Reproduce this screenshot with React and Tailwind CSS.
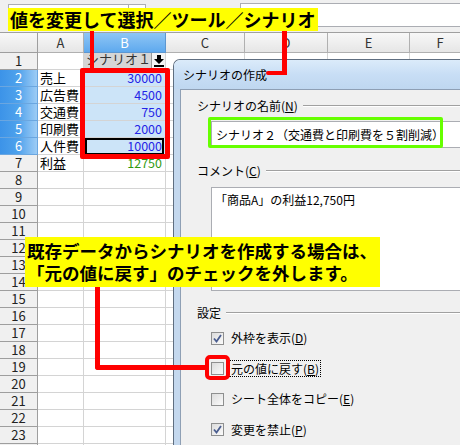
import React from 'react';

const font = { fontFamily: '"Noto Sans CJK JP", "Liberation Sans", sans-serif' };

const rows = [
  { n: 1, a: '', b: '', combo: true },
  { n: 2, a: '売上', b: '30000', sel: true },
  { n: 3, a: '広告費', b: '4500', sel: true },
  { n: 4, a: '交通費', b: '750', sel: true },
  { n: 5, a: '印刷費', b: '2000', sel: true },
  { n: 6, a: '人件費', b: '10000', sel: true, active: true },
  { n: 7, a: '利益', b: '12750', green: true },
];
for (let i = 8; i <= 24; i++) rows.push({ n: i, a: '', b: '' });

const GroupLabel = ({ children }) => (
  <div className="flex h-[16px] items-center gap-[5px]">
    <span className="text-[12px] leading-[16px] whitespace-nowrap">{children}</span>
    <div className="h-[2px] flex-1 border-t border-b border-t-[#a0a0a0] border-b-white" />
  </div>
);

const Checkbox = ({ checked }) => (
  <div className="flex h-[13px] w-[13px] shrink-0 items-center justify-center border border-[#8e8f8f] bg-linear-to-br from-[#dcdcdc] to-[#fbfbfb]">
    {checked && (
      <svg width="9" height="9" viewBox="0 0 9 9">
        <path d="M1 4.5 L3.5 7.5 L8 1" fill="none" stroke="#4a5d8f" strokeWidth="1.8" />
      </svg>
    )}
  </div>
);

const CheckRow = ({ checked, focus, children }) => (
  <div className="flex h-[16px] items-center gap-[5px]">
    <Checkbox checked={checked} />
    <span
      className={
        focus
          ? 'border border-dotted border-black px-[1px] text-[12px] leading-[15px] whitespace-nowrap'
          : 'px-[2px] text-[12px] leading-[16px] whitespace-nowrap'
      }
    >
      {children}
    </span>
  </div>
);

export default function App() {
  return (
    <div className="relative h-[445px] w-[460px] overflow-hidden bg-[#f0f0f0] text-black" style={font}>
      {/* formula bar */}
      <div className="relative h-[32px]">
        <div className="absolute left-[8px] top-[4px] flex h-[26px] w-[138px] border border-[#abadb3] bg-white">
          <div className="flex-1" />
          <div className="w-[17px] border-l border-[#abadb3]" />
        </div>
        <div className="absolute left-[240px] top-[3px] h-[24px] w-[230px] border border-[#abadb3] bg-white" />
      </div>

      {/* column header */}
      <div className="flex h-[21px] border-t border-[#a0a0a0] text-[13px] leading-[20px]">
        <div className="w-[38px] shrink-0 border-r border-b border-[#9e9e9e] bg-linear-to-b from-[#f8f8f8] to-[#e6e6e6]" />
        <div className="w-[46px] shrink-0 border-r border-b border-[#b0b0b0] bg-linear-to-b from-[#f8f8f8] to-[#e6e6e6] text-center text-[#333]">A</div>
        <div className="w-[82px] shrink-0 border-r border-b border-[#5d97d0] bg-linear-to-b from-[#8ec6f5] to-[#5ea9ee] text-center text-white">B</div>
        <div className="w-[79px] shrink-0 border-r border-b border-[#b0b0b0] bg-linear-to-b from-[#f8f8f8] to-[#e6e6e6] text-center text-[#333]">C</div>
        <div className="w-[83px] shrink-0 border-r border-b border-[#b0b0b0] bg-linear-to-b from-[#f8f8f8] to-[#e6e6e6] text-center text-[#333]">D</div>
        <div className="w-[82px] shrink-0 border-r border-b border-[#b0b0b0] bg-linear-to-b from-[#f8f8f8] to-[#e6e6e6] text-center text-[#333]">E</div>
        <div className="w-[60px] shrink-0 border-b border-[#b0b0b0] bg-linear-to-b from-[#f8f8f8] to-[#e6e6e6] text-center text-[#333]">F</div>
      </div>

      {/* grid rows */}
      {rows.map((r) => (
        <div key={r.n} className="flex h-[17px] bg-white text-[13px] leading-[16px]">
          <div
            className={
              r.sel
                ? 'w-[38px] shrink-0 border-r border-b border-[#6aa6e0] bg-linear-to-r from-[#3c93e8] via-[#4ea2ec] to-[#9dccf5] text-center text-white'
                : 'w-[38px] shrink-0 border-r border-b border-[#9e9e9e] bg-[#f0f0f0] text-center text-[#222]'
            }
          >
            {r.n}
          </div>
          <div className="w-[46px] shrink-0 border-r border-b border-[#d4d4d4] pl-[2px] whitespace-nowrap">{r.a}</div>
          <div
            className={
              r.sel
                ? 'relative w-[82px] shrink-0 border-r border-b border-[#d4d4d4] bg-[#cce4f8] pr-[3px] text-right text-[12.5px] text-[#2424e6]'
                : r.green
                ? 'w-[82px] shrink-0 border-r border-b border-[#d4d4d4] pr-[3px] text-right text-[12.5px] text-[#2f9a10]'
                : 'w-[82px] shrink-0 border-r border-b border-[#d4d4d4]'
            }
          >
            {r.combo ? (
              <div className="flex h-[15px] bg-[#d6d6d6]">
                <span className="flex-1 overflow-hidden pl-[2px] text-[13px] leading-[11px] whitespace-nowrap text-[#333]">シナリオ１</span>
                <div className="flex w-[14px] items-center justify-center border-l border-[#999] bg-[#f4f4f4]">
                  <svg width="10" height="12" viewBox="0 0 10 12">
                    <path d="M3 0 H7 V4 H10 L5 9 L0 4 H3 Z" fill="#000" />
                    <rect x="0" y="10" width="10" height="2" fill="#000" />
                  </svg>
                </div>
              </div>
            ) : (
              r.b
            )}
            {r.active && <div className="absolute inset-x-[1px] top-0 bottom-[-1px] border-2 border-black" />}
          </div>
          <div className="w-[79px] shrink-0 border-r border-b border-[#d4d4d4]" />
          <div className="w-[83px] shrink-0 border-r border-b border-[#d4d4d4]" />
          <div className="w-[82px] shrink-0 border-r border-b border-[#d4d4d4]" />
          <div className="w-[60px] shrink-0 border-b border-[#d4d4d4]" />
        </div>
      ))}

      {/* dialog window */}
      <div className="absolute left-[173px] top-[59px] flex h-[400px] w-[300px] flex-col overflow-hidden rounded-tl-[7px] border-l border-t border-[#5f6e80]" style={font}>
        <div className="flex h-[29px] shrink-0 items-center bg-linear-to-b from-[#dbebfa] via-[#c8def5] to-[#bfd7f0] pl-[9px] text-[12px] text-black">
          シナリオの作成
        </div>
        <div className="flex flex-1">
          <div className="w-[6px] shrink-0 bg-[#c4d8ee]" />
          <div className="flex flex-1 flex-col border-l border-t border-[#8e9fb4] bg-[#f0f0f0] pl-[16px] pt-[8px]">
            <GroupLabel>
              シナリオの名前(<span className="underline">N</span>)
            </GroupLabel>
            <div className="ml-[14px] mt-[7px] flex h-[27px] items-center border border-[#abadb3] bg-white pl-[4px] text-[12px] whitespace-nowrap">
              シナリオ２（交通費と印刷費を５割削減）
            </div>
            <div className="mt-[15px]">
              <GroupLabel>
                コメント(<span className="underline">C</span>)
              </GroupLabel>
            </div>
            <div className="ml-[14px] mt-[8px] h-[104px] border border-[#abadb3] bg-white pl-[3px] pt-[4px] text-[12px] leading-[16px]">
              「商品A」の利益12,750円
            </div>
            <div className="mt-[14px]">
              <GroupLabel>設定</GroupLabel>
            </div>
            <div className="ml-[14px] mt-[9px] flex flex-col gap-[14.5px]">
              <CheckRow checked>
                外枠を表示(<span className="underline">D</span>)
              </CheckRow>
              <CheckRow focus>
                元の値に戻す(<span className="underline">B</span>)
              </CheckRow>
              <CheckRow>
                シート全体をコピー(<span className="underline">E</span>)
              </CheckRow>
              <CheckRow checked>
                変更を禁止(<span className="underline">P</span>)
              </CheckRow>
            </div>
          </div>
        </div>
      </div>

      {/* annotations */}
      <div className="absolute left-[90px] top-[30px] h-[42px] w-[4px] bg-[#ff0000]" />
      <div className="absolute left-[80px] top-[68px] h-[91px] w-[90px] rounded-[2px] border-[5px] border-[#ff0000]" />
      <div className="absolute left-[282px] top-[30px] h-[45px] w-[5px] bg-[#ff0000]" />
      <div className="absolute left-[266px] top-[71px] h-[4px] w-[21px] rounded-l-[2px] bg-[#ff0000]" />

      <div className="absolute left-[208px] top-[117px] h-[31px] w-[235px] rounded-[2px] border-[3px] border-[#66ff00]" />

      <div className="absolute left-[95px] top-[286px] h-[84px] w-[5px] rounded-bl-[3px] bg-[#ff0000]" />
      <div className="absolute left-[95px] top-[365px] h-[5px] w-[112px] rounded-bl-[3px] bg-[#ff0000]" />
      <div className="absolute left-[205px] top-[355px] h-[25px] w-[25px] rounded-[5px] border-[4px] border-[#ff0000]" />

      <div className="absolute left-[8px] top-[8px] h-[23px] w-[310px] bg-[#ffff00] pl-[2px] text-[18px] font-bold leading-[23px] whitespace-nowrap">
        値を変更して選択／ツール／シナリオ
      </div>
      <div className="absolute left-[25px] top-[237px] h-[50px] w-[355px] bg-[#ffff00] pl-[2px] pt-[3px] text-[17.5px] font-bold leading-[22px] whitespace-nowrap">
        <div>既存データからシナリオを作成する場合は、</div>
        <div>「元の値に戻す」のチェックを外します。</div>
      </div>
    </div>
  );
}
